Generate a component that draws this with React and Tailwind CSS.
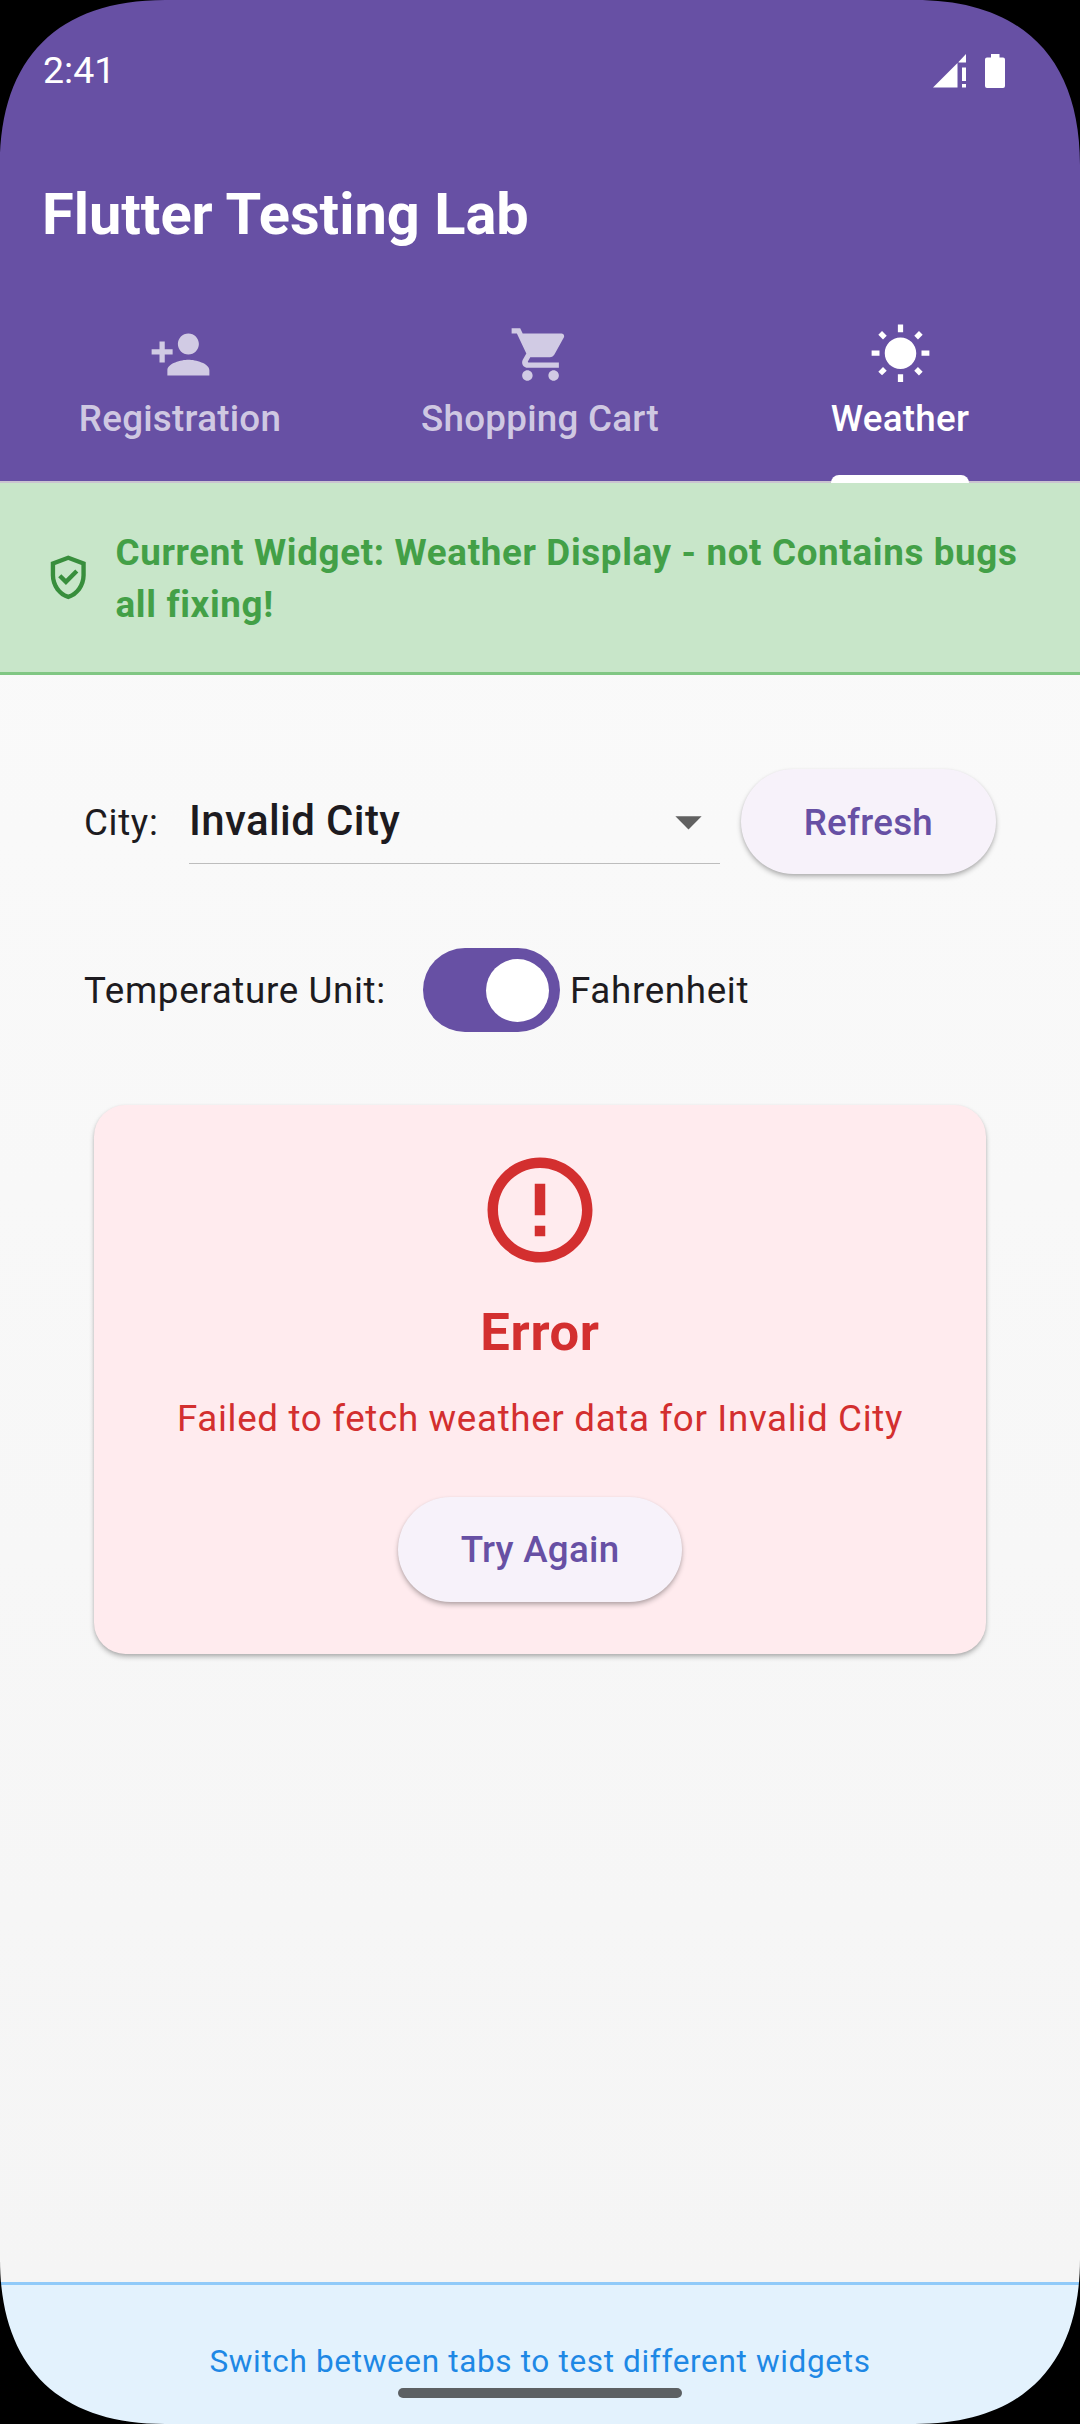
import React from "react";

const ICONS = {
  personAdd:
    "M15 12c2.21 0 4-1.79 4-4s-1.79-4-4-4-4 1.79-4 4 1.79 4 4 4zm-9-2V7H4v3H1v2h3v3h2v-3h3v-2H6zm9 4c-2.67 0-8 1.34-8 4v2h16v-2c0-2.66-5.33-4-8-4z",
  cart:
    "M7 18c-1.1 0-1.99.9-1.99 2S5.9 22 7 22s2-.9 2-2-.9-2-2-2zM1 2v2h2l3.6 7.59-1.35 2.45c-.16.28-.25.61-.25.96 0 1.1.9 2 2 2h12v-2H7.42c-.14 0-.25-.11-.25-.25l.03-.12.9-1.63h7.45c.75 0 1.41-.41 1.75-1.03l3.58-6.49c.08-.14.12-.31.12-.48 0-.55-.45-1-1-1H5.21l-.94-2H1zm16 16c-1.1 0-1.99.9-1.99 2s.89 2 1.99 2 2-.9 2-2-.9-2-2-2z",
  sun:
    "M6.76 4.84l-1.8-1.79-1.41 1.41 1.79 1.79 1.42-1.41zM4 10.5H1v2h3v-2zm9-9.95h-2V3.5h2V.55zm7.45 3.91l-1.41-1.41-1.79 1.79 1.41 1.41 1.79-1.79zm-3.21 13.7l1.79 1.8 1.41-1.41-1.8-1.79-1.4 1.4zM20 10.5v2h3v-2h-3zm-8-5c-3.31 0-6 2.69-6 6s2.69 6 6 6 6-2.69 6-6-2.69-6-6-6zm-1 16.95h2V19.5h-2v2.95zm-7.45-3.91l1.41 1.41 1.79-1.8-1.41-1.41-1.79 1.8z",
  shield:
    "M12 2L4 5v6.09c0 5.05 3.41 9.76 8 10.91 4.59-1.15 8-5.86 8-10.91V5l-8-3zm6 9.09c0 4-2.55 7.7-6 8.83-3.45-1.13-6-4.82-6-8.83v-4.7l6-2.25 6 2.25v4.7zm-9.18-.5L7.4 12l3.54 3.54 5.66-5.66-1.41-1.41-4.24 4.24-2.13-2.12z",
  dropDown: "M7 10l5 5 5-5z",
  error:
    "M11 15h2v2h-2zm0-8h2v6h-2zm.99-5C6.47 2 2 6.48 2 12s4.47 10 9.99 10C17.52 22 22 17.52 22 12S17.52 2 11.99 2zM12 20c-4.42 0-8-3.58-8-8s3.58-8 8-8 8 3.58 8 8-3.58 8-8 8z",
};

function Icon({ name, className }) {
  return (
    <svg viewBox="0 0 24 24" fill="currentColor" className={`block shrink-0 ${className}`}>
      <path d={ICONS[name]} />
    </svg>
  );
}

function StatusBar() {
  return (
    <div className="flex h-[142px] items-start justify-between pl-[43px] pr-[75px]">
      <span className="mt-[49px] text-[37.500px] leading-[43px]">2:41</span>
      <div className="mt-[54px] flex items-start gap-[19px]">
        <svg viewBox="0 0 33 34" className="block h-[34px] w-[33px]" fill="currentColor">
          <path d="M0 33.5L24.5 9v24.5zM25.5 8L33 0v8.5h-7.5zM29 13.5h4V27h-4zM29 30h4v3.5h-4z" />
        </svg>
        <svg viewBox="0 0 20 34" className="block h-[34px] w-[20px]" fill="currentColor">
          <path d="M6 0h8.5v3.5H18a2 2 0 0 1 2 2V32a2 2 0 0 1-2 2H2a2 2 0 0 1-2-2V5.500a2 2 0 0 1 2-2h4z" />
        </svg>
      </div>
    </div>
  );
}

function Tab({ icon, label, active }) {
  return (
    <div
      className={`flex h-[194px] flex-1 flex-col items-center border-b-2 border-[#cac4d0] pt-[33.500px] ${
        active ? "text-white" : "text-white/70"
      }`}
    >
      <Icon name={icon} className="size-[63px]" />
      <div className="relative mt-[7px] h-[101px]">
        <span className="block whitespace-nowrap text-[36.75px] font-medium leading-[52.500px] tracking-[0.26px]">
          {label}
        </span>
        {active && (
          <span className="absolute -bottom-[1.500px] left-0 h-2 w-full rounded-t-[8px] bg-white" />
        )}
      </div>
    </div>
  );
}

function Button({ children }) {
  return (
    <button className="flex h-[105px] shrink-0 items-center rounded-full bg-[#f7f2fa] px-[63px] pt-[3px] text-[36.75px] font-medium leading-[52.500px] tracking-[0.26px] text-[#6750a4] shadow-[0_3px_5px_rgba(0,0,0,0.25),0_1px_3px_rgba(0,0,0,0.08)]">
      {children}
    </button>
  );
}

function Corner({ className }) {
  return (
    <svg viewBox="0 0 165 165" className={`absolute size-[165px] ${className}`}>
      <path d="M0 0H165C58 0 0 58 0 165z" fill="#000" />
    </svg>
  );
}

export default function App() {
  return (
    <div className="relative flex h-[2424px] w-[1080px] flex-col overflow-hidden font-['Roboto',sans-serif] text-[36.75px] leading-[52.500px] tracking-[0.656px] text-[#1d1b20]">
      <header className="h-[483px] shrink-0 bg-[#6750a4] tracking-normal text-white">
        <StatusBar />
        <h1 className="flex h-[147px] items-center pb-[2px] pl-[42px] text-[57.75px] font-bold leading-[73.500px]">
          Flutter Testing Lab
        </h1>
        <nav className="flex">
          <Tab icon="personAdd" label="Registration" />
          <Tab icon="cart" label="Shopping Cart" />
          <Tab icon="sun" label="Weather" active />
        </nav>
      </header>

      <main className="flex flex-1 flex-col bg-linear-to-b from-[#fafafa] to-[#f5f5f5]">
        <section className="flex h-[192px] items-center gap-[21px] border-b-[3px] border-[#81c784] bg-[#c8e6c9] px-[42px]">
          <Icon name="shield" className="size-[52.500px] text-[#388e3c]" />
          <p className="pt-[3px] font-bold text-[#43a047]">
            Current Widget: Weather Display - not Contains bugs
            <br />
            all fixing!
          </p>
        </section>

        <section className="flex flex-col px-[84px] pt-[83.25px]">
          <div className="flex h-[126px] items-center">
            <span className="w-[105px] pt-[3px]">City:</span>
            <div className="flex h-[86px] w-[531px] border-b border-[#bdbdbd]">
              <div className="flex flex-1 items-center justify-between">
                <span className="text-[42px] font-medium leading-[63px] tracking-[0.39px]">Invalid City</span>
                <Icon name="dropDown" className="mt-px size-[63px] text-[#616161]" />
              </div>
            </div>
            <div className="ml-[21px]">
              <Button>Refresh</Button>
            </div>
          </div>

          <div className="mt-[42.75px] flex h-[126px] items-center">
            <span className="w-[339px] pt-[3px]">Temperature Unit:</span>
            <div className="flex h-[84px] w-[136.500px] items-center justify-end rounded-full bg-[#6750a4] pr-[10.500px]">
              <span className="size-[63px] rounded-full bg-white" />
            </div>
            <span className="ml-[10.500px] pt-[3px]">Fahrenheit</span>
          </div>

          <div className="mx-[10px] mt-[51.500px] flex h-[549px] flex-col items-center rounded-[31.500px] bg-[#ffebee] pt-[42px] text-[#d32f2f] shadow-[0_3px_5px_rgba(0,0,0,0.25),0_1px_3px_rgba(0,0,0,0.08)]">
            <Icon name="error" className="size-[126px]" />
            <h2 className="mt-[22px] text-[52.500px] font-bold leading-[75px]">Error</h2>
            <p className="mt-[23px]">Failed to fetch weather data for Invalid City</p>
            <div className="mt-[51.500px]">
              <Button>Try Again</Button>
            </div>
          </div>
        </section>
      </main>

      <footer className="relative flex h-[142px] shrink-0 flex-col items-center border-t-[3px] border-[#90caf9] bg-[#e3f2fd] pt-[56px] text-[31.500px] leading-[42px] text-[#1e88e5]">
        <p>Switch between tabs to test different widgets</p>
        <span className="absolute bottom-[26px] h-[10px] w-[284px] rounded-full bg-[#5c6063]" />
      </footer>

      <Corner className="left-0 top-0" />
      <Corner className="right-0 top-0 rotate-90" />
      <Corner className="bottom-0 right-0 rotate-180" />
      <Corner className="bottom-0 left-0 -rotate-90" />
    </div>
  );
}
